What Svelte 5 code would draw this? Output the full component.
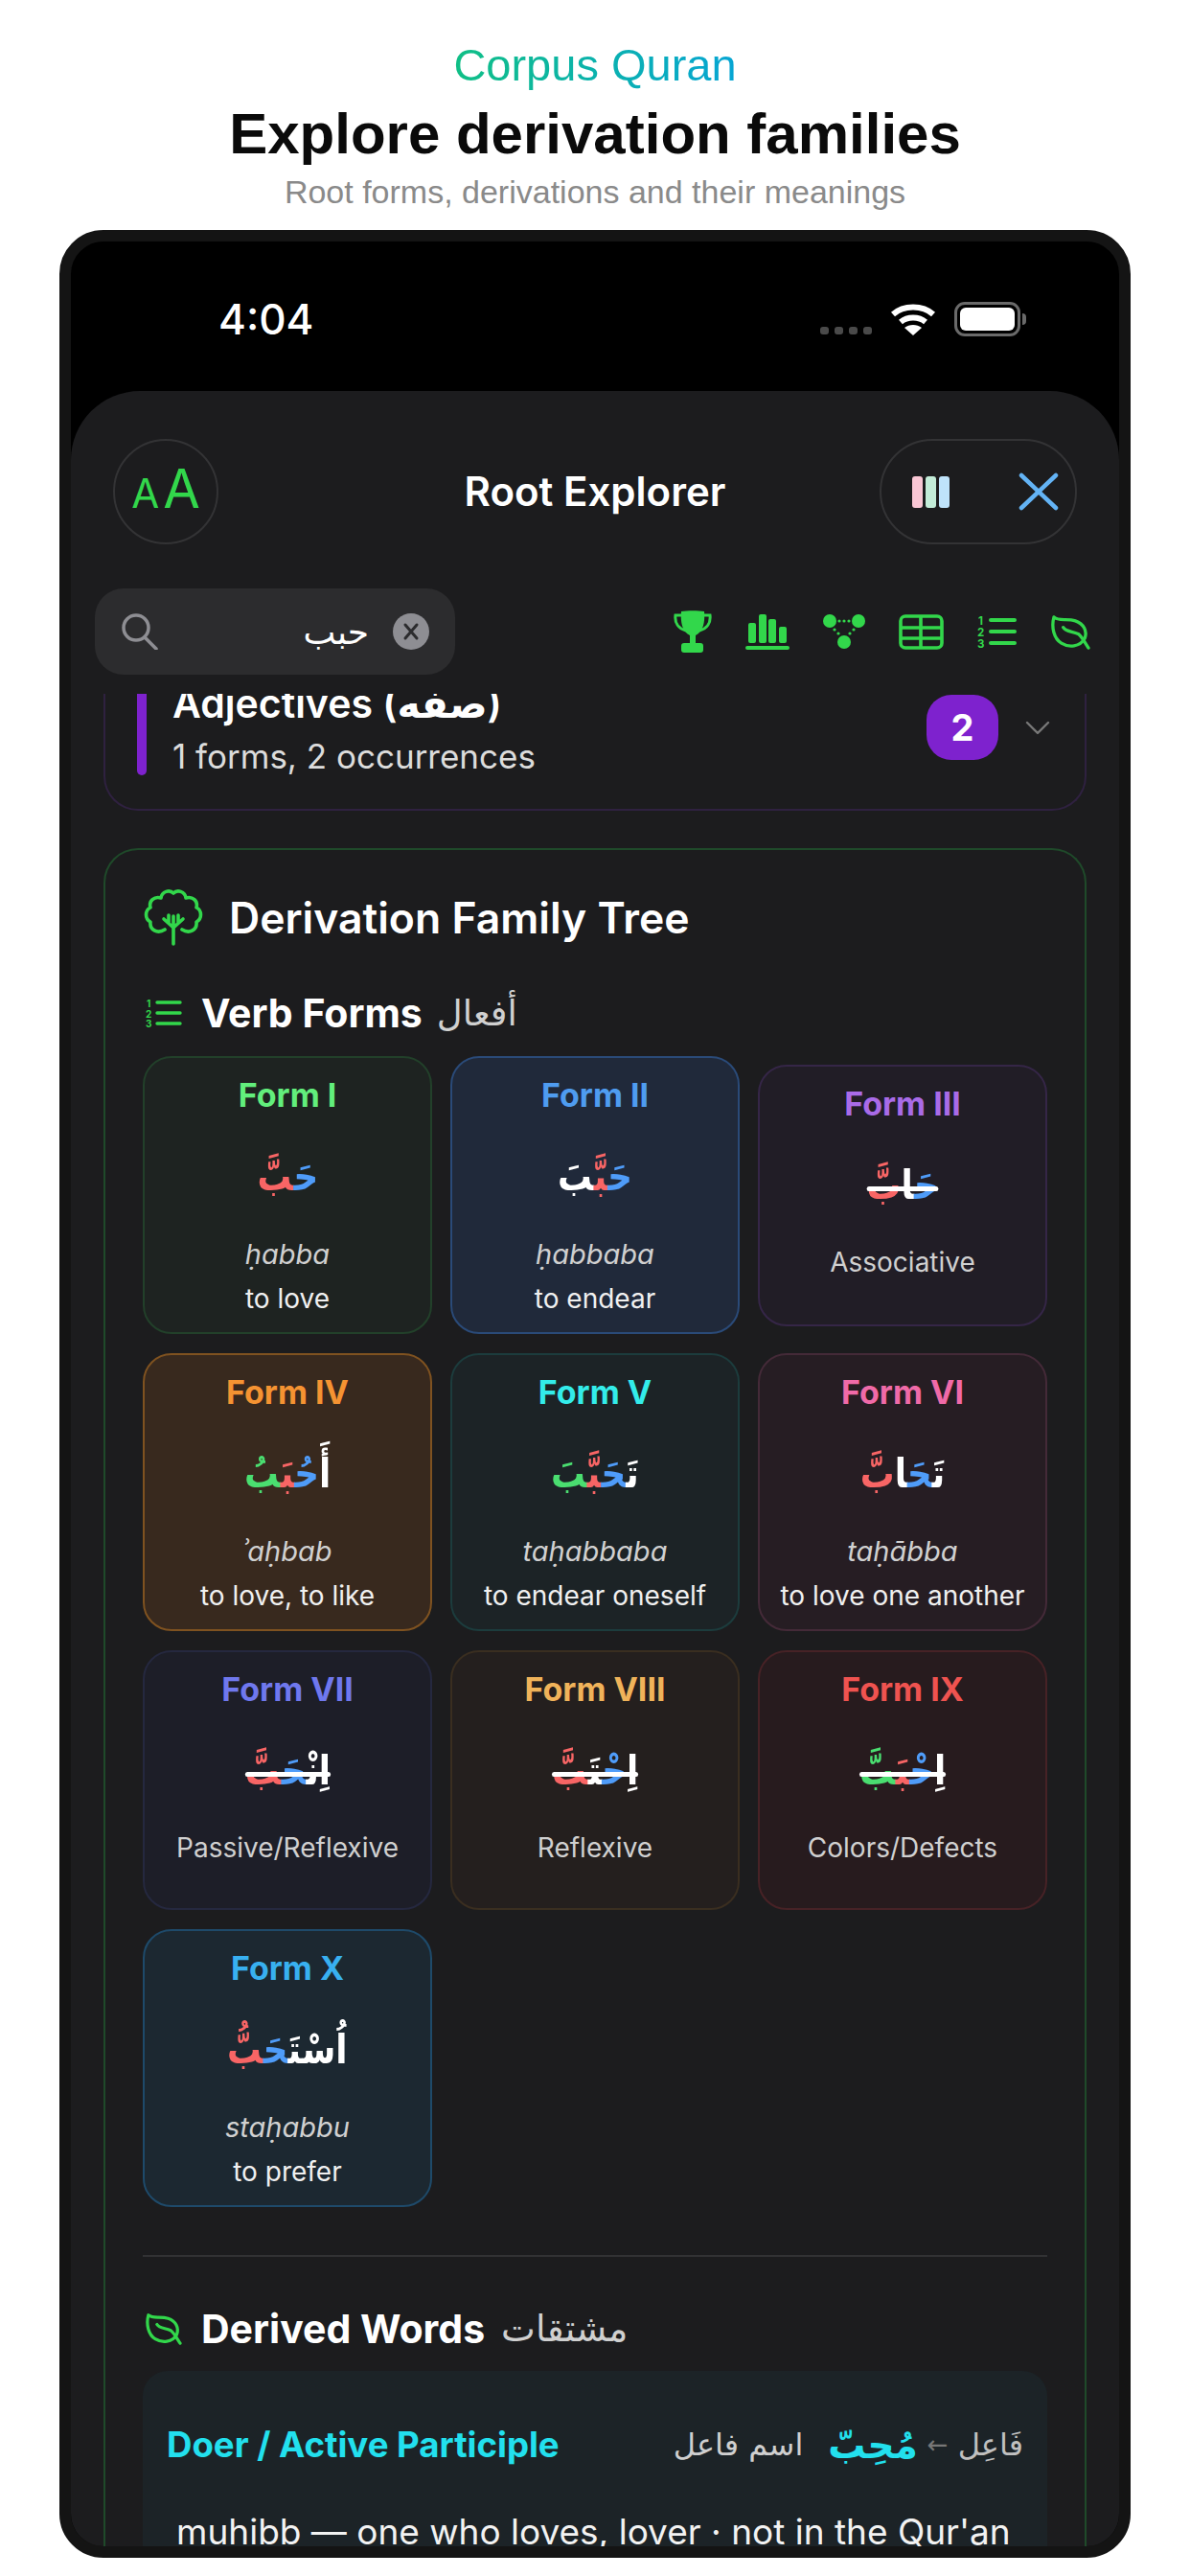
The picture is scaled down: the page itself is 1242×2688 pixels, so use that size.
<script>
  const forms = [
    { k: 'f1', name: 'Form I', ar: [['حَ','b'],['بَّ','r']], tr: 'ḥabba', mean: 'to love' },
    { k: 'f2', name: 'Form II', ar: [['حَ','b'],['ب','r'],['َّ','g'],['بَ','w']], tr: 'ḥabbaba', mean: 'to endear' },
    { k: 'f3', name: 'Form III', ar: [['حَ','b'],['ا','w'],['بَّ','r']], label: 'Associative', bar: true },
    { k: 'f4', name: 'Form IV', ar: [['أَ','w'],['حُ','b'],['بَ','r'],['بُ','g']], tr: 'ʾaḥbab', mean: 'to love, to like' },
    { k: 'f5', name: 'Form V', ar: [['تَ','w'],['حَ','b'],['بَّ','r'],['بَ','g']], tr: 'taḥabbaba', mean: 'to endear oneself' },
    { k: 'f6', name: 'Form VI', ar: [['تَ','w'],['حَ','b'],['ا','w'],['بَّ','r']], tr: 'taḥābba', mean: 'to love one another' },
    { k: 'f7', name: 'Form VII', ar: [['اِنْ','w'],['حَ','b'],['بَّ','r']], label: 'Passive/Reflexive', bar: true },
    { k: 'f8', name: 'Form VIII', ar: [['اِ','w'],['حْ','b'],['تَ','w'],['بَّ','r']], label: 'Reflexive', bar: true },
    { k: 'f9', name: 'Form IX', ar: [['اِ','w'],['حْ','b'],['بَ','r'],['بَّ','g']], label: 'Colors/Defects', bar: true },
    { k: 'f10', name: 'Form X', ar: [['اُسْتَ','w'],['حَ','b'],['ب','r'],['ُّ','g']], tr: 'staḥabbu', mean: 'to prefer' }
  ];
</script>

<div class="page">
  <header class="promo">
    <div class="brand"><span>Corpus Quran</span></div>
    <h1>Explore derivation families</h1>
    <p>Root forms, derivations and their meanings</p>
  </header>

  <div class="phone">
    <div class="status">
      <span class="time">4:04</span>
      <div class="status-icons">
        <div class="dots"><i></i><i></i><i></i><i></i></div>
        <svg class="wifi" width="48" height="36" viewBox="0 0 48 36" fill="none" stroke="#fff" stroke-width="6">
          <path d="M3 13 C14 3 34 3 45 13" />
          <path d="M11 21 C18 15 30 15 37 21" />
          <path d="M24 35 L15 27 C20 23 28 23 33 27Z" fill="#fff" stroke="none" />
        </svg>
        <div class="battery"><div class="cell"></div></div>
        <div class="tip"></div>
      </div>
    </div>

    <section class="sheet">
      <div class="topbar">
        <div class="aa"><span class="sm">A</span><span class="lg">A</span></div>
        <h2>Root Explorer</h2>
        <div class="pill">
          <div class="bars"><i class="p"></i><i class="m"></i><i class="s"></i></div>
          <svg width="42" height="40" viewBox="0 0 42 40" fill="none" stroke="#63b3f5" stroke-width="4.5" stroke-linecap="round">
            <path d="M3 3 L39 37 M39 3 L3 37" />
          </svg>
        </div>
      </div>

      <div class="toolbar">
        <div class="search">
          <svg width="38" height="38" viewBox="0 0 38 38" fill="none" stroke="#8e8e93" stroke-width="3.5" stroke-linecap="round">
            <circle cx="15" cy="15" r="13" />
            <path d="M24 25 L36 37" />
          </svg>
          <span class="query">حبب</span>
          <span class="clear">
            <svg width="20" height="20" viewBox="0 0 20 20" fill="none" stroke="#2c2c2e" stroke-width="3" stroke-linecap="round">
              <path d="M4 3 L16 17 M16 3 L4 17" />
            </svg>
          </span>
        </div>
        <div class="tools">
          <svg width="40" height="44" viewBox="0 0 40 44">
            <path fill="none" stroke="#32d74b" stroke-width="3" d="M8 5 H2 C1 13 5 19 13 21 M32 5 H38 C39 13 35 19 27 21" />
            <path fill="#32d74b" d="M8 1 C14 0 26 0 32 1 C33 12 31 22 23 26 V34 H28 C30 34 31 35 31 37 V41 C31 43 30 44 28 44 H11 C9 44 8 43 8 41 V37 C8 35 9 34 11 34 H17 V26 C9 22 7 12 8 1Z" />
          </svg>
          <svg width="46" height="37" viewBox="0 0 46 37" fill="#32d74b">
            <rect x="3" y="9" width="8" height="21" rx="2" />
            <rect x="14" y="0" width="8" height="30" rx="2" />
            <rect x="24" y="5" width="8" height="25" rx="2" />
            <rect x="35" y="13" width="8" height="17" rx="2" />
            <rect x="0" y="33" width="46" height="4" rx="2" />
          </svg>
          <svg width="44" height="36" viewBox="0 0 44 36" fill="#32d74b">
            <circle cx="7" cy="7" r="7" /><circle cx="37" cy="7" r="7" /><circle cx="22" cy="29" r="7" />
            <circle cx="17" cy="7" r="1.6" /><circle cx="22" cy="7" r="1.6" /><circle cx="27" cy="7" r="1.6" />
            <circle cx="12" cy="16" r="1.6" /><circle cx="16" cy="20" r="1.6" /><circle cx="28" cy="20" r="1.6" /><circle cx="32" cy="16" r="1.6" />
          </svg>
          <svg width="47" height="37" viewBox="0 0 47 37" fill="none" stroke="#32d74b" stroke-width="3.6">
            <rect x="2" y="2" width="43" height="33" rx="5" />
            <path d="M2 14 H45 M2 25 H45 M23 2 V35" />
          </svg>
          <svg width="41" height="35" viewBox="0 0 41 35" fill="none" stroke="#32d74b" stroke-width="4" stroke-linecap="round">
            <path d="M14 5 H39 M14 17 H39 M14 29 H39" />
            <g fill="#32d74b" stroke="none" font-family="Inter" font-weight="700" font-size="11.5">
              <text x="1" y="10">1</text><text x="0" y="22">2</text><text x="0" y="34">3</text>
            </g>
          </svg>
          <svg width="43" height="37" viewBox="0 0 44 38" fill="none" stroke="#32d74b" stroke-width="3.4" stroke-linecap="round" stroke-linejoin="round">
            <path d="M4 3 C9 8 18 4 27 7 C36 10 40 18 37 26 C32 35 20 36 12 31 C4 26 1 14 4 3Z" />
            <path d="M14 14 C17 19 24 18 30 21 C34 24 37 30 41 36" />
          </svg>
        </div>
      </div>

      <div class="scroll">
        <div class="inner">
          <article class="adj">
            <span class="rail"></span>
            <div class="adj-text">
              <div class="adj-title">Adjectives (صفه)</div>
              <div class="adj-sub">1 forms, 2 occurrences</div>
            </div>
            <span class="badge">2</span>
            <svg width="26" height="15" viewBox="0 0 26 15" fill="none" stroke="#777" stroke-width="2.4" stroke-linecap="round" stroke-linejoin="round">
              <path d="M2 2 L13 13 L24 2" />
            </svg>
          </article>

          <article class="tree">
            <div class="tree-head">
              <svg width="64" height="60" viewBox="0 0 64 60" fill="none" stroke="#32d74b" stroke-width="3.6" stroke-linecap="round" stroke-linejoin="round">
                <path d="M32 4 C28 0 20 2 19 9 C12 7 6 12 8 19 C2 22 2 31 8 34 C7 42 15 47 23 42 M32 4 C36 0 44 2 45 9 C52 7 58 12 56 19 C62 22 62 31 56 34 C57 42 49 47 41 42" />
                <path d="M32 57 V28 M32 40 L22 31 M32 40 L42 31 M27 35 V27 M37 35 V27" />
              </svg>
              <h3>Derivation Family Tree</h3>
            </div>

            <div class="sub-head">
              <svg width="38" height="30" viewBox="0 0 38 30" fill="none" stroke="#32d74b" stroke-width="3.4" stroke-linecap="round">
                <path d="M12 4 H36 M12 15 H36 M12 26 H36" />
                <g fill="#32d74b" stroke="none" font-family="Inter" font-weight="700" font-size="10">
                  <text x="1" y="9">1</text><text x="0" y="19.5">2</text><text x="0" y="30">3</text>
                </g>
              </svg>
              <strong>Verb Forms</strong>
              <span class="sub-ar">أفعال</span>
            </div>

            <div class="grid">
              {#each forms as f}
                <div class="form {f.k}" class:short={f.label}>
                  <div class="name">{f.name}</div>
                  <div class="word" class:bar={f.bar} dir="rtl">{#each f.ar as a}<span class={a[1]}>{a[0]}</span>{/each}</div>
                  {#if f.label}
                    <div class="tr plain">{f.label}</div>
                  {:else}
                    <div class="tr">{f.tr}</div>
                    <div class="mean">{f.mean}</div>
                  {/if}
                </div>
              {/each}
            </div>

            <hr />

            <div class="sub-head derived">
              <svg width="40" height="34" viewBox="0 0 44 38" fill="none" stroke="#32d74b" stroke-width="3.6" stroke-linecap="round" stroke-linejoin="round">
                <path d="M4 3 C9 8 18 4 27 7 C36 10 40 18 37 26 C32 35 20 36 12 31 C4 26 1 14 4 3Z" />
                <path d="M14 14 C17 19 24 18 30 21 C34 24 37 30 41 36" />
              </svg>
              <strong>Derived Words</strong>
              <span class="sub-ar">مشتقات</span>
            </div>

            <div class="dcard">
              <div class="dhead">
                <span class="dname">Doer / Active Participle</span>
                <div class="dright">
                  <span class="dar">اسم فاعل</span>
                  <span class="dword">مُحِبّ</span>
                  <span class="darrow">←</span>
                  <span class="dpat">فَاعِل</span>
                </div>
              </div>
              <p class="dtext">muhibb — one who loves, lover · not in the Qur'an</p>
            </div>
          </article>
        </div>
      </div>
    </section>
  </div>
</div>

<style>
  :global(body) {
    margin: 0;
    background: #fff;
  }
  .page {
    width: 1242px;
    height: 2688px;
    overflow: hidden;
    background: #fff;
    font-family: Inter, "DejaVu Sans", sans-serif;
  }
  .promo {
    padding-top: 41px;
    text-align: center;
    font-family: "Liberation Sans", "DejaVu Sans", sans-serif;
  }
  .brand {
    font-size: 47px;
    line-height: 54px;
  }
  .brand span {
    background: linear-gradient(90deg, #10bf85, #06a5d4);
    -webkit-background-clip: text;
    background-clip: text;
    color: transparent;
  }
  h1 {
    margin: 10px 0 0;
    font-size: 60px;
    line-height: 70px;
    font-weight: 700;
    color: #0a0a0a;
  }
  .promo p {
    margin: 4px 0 0;
    font-size: 34px;
    line-height: 42px;
    color: #8a8a8a;
  }
  .phone {
    box-sizing: border-box;
    width: 1118px;
    height: 2429px;
    margin: 19px 0 0 62px;
    border: 12px solid #141414;
    border-radius: 46px;
    background: #000;
    overflow: hidden;
    display: flex;
    flex-direction: column;
    color: #fff;
  }
  .status {
    height: 156px;
    flex: none;
    display: flex;
    align-items: center;
    justify-content: space-between;
    padding: 6px 97px 0 154px;
    box-sizing: border-box;
  }
  .time {
    font-size: 44px;
    font-weight: 500;
  }
  .status-icons {
    display: flex;
    align-items: center;
  }
  .dots {
    display: flex;
    gap: 6px;
    margin: 24px 19px 0 0;
  }
  .dots i {
    width: 9px;
    height: 8px;
    border-radius: 3px;
    background: #4a4a4a;
  }
  .wifi {
    margin-right: 19px;
  }
  .battery {
    box-sizing: border-box;
    width: 69px;
    height: 36px;
    border: 3px solid #6a6a6a;
    border-radius: 11px;
    padding: 3px;
    background: #000;
  }
  .cell {
    width: 100%;
    height: 100%;
    background: #fff;
    border-radius: 6px;
  }
  .tip {
    width: 4px;
    height: 12px;
    margin-left: 2px;
    background: #6a6a6a;
    border-radius: 0 4px 4px 0;
  }
  .sheet {
    flex: 1;
    min-height: 0;
    background: #1c1c1e;
    border-radius: 72px 72px 0 0;
    display: flex;
    flex-direction: column;
  }
  .topbar {
    flex: none;
    display: grid;
    grid-template-columns: 1fr auto 1fr;
    align-items: center;
    padding: 50px 44px 0 44px;
  }
  .aa {
    box-sizing: border-box;
    width: 110px;
    height: 110px;
    border-radius: 50%;
    border: 2px solid #333335;
    display: flex;
    align-items: baseline;
    justify-content: center;
    gap: 4px;
    color: #32d74b;
    line-height: 100px;
    font-weight: 400;
  }
  .aa .sm { font-size: 42px; }
  .aa .lg { font-size: 56px; }
  h2 {
    margin: 0;
    font-size: 42px;
    font-weight: 600;
    line-height: 60px;
  }
  .pill {
    box-sizing: border-box;
    justify-self: end;
    width: 206px;
    height: 110px;
    border-radius: 55px;
    border: 2px solid #333335;
    display: flex;
    align-items: center;
    gap: 72px;
    padding-left: 32px;
  }
  .bars {
    display: flex;
    gap: 3px;
  }
  .bars i {
    width: 11px;
    height: 33px;
    border-radius: 3px;
  }
  .bars .p { background: #f9c6d4; }
  .bars .m { background: #c3ecd8; }
  .bars .s { background: #bfe3fa; }
  .toolbar {
    flex: none;
    display: flex;
    align-items: center;
    justify-content: space-between;
    margin-top: 46px;
    padding: 0 29px 0 25px;
  }
  .search {
    box-sizing: border-box;
    width: 376px;
    height: 90px;
    border-radius: 30px;
    background: #2c2c2e;
    display: flex;
    align-items: center;
    padding: 0 27px 0 28px;
  }
  .query {
    margin-left: auto;
    font-size: 36px;
    font-family: "DejaVu Sans", sans-serif;
    margin-right: 25px;
  }
  .clear {
    width: 38px;
    height: 38px;
    border-radius: 50%;
    background: #8e8e93;
    display: flex;
    align-items: center;
    justify-content: center;
  }
  .tools {
    display: flex;
    align-items: center;
    gap: 35px;
  }
  .scroll {
    flex: 1;
    min-height: 0;
    margin-top: 20px;
    overflow: hidden;
  }
  .inner {
    margin-top: -21px;
    padding: 0 34px;
  }
  .adj {
    box-sizing: border-box;
    height: 143px;
    border: 2px solid #2f2140;
    border-top: 0;
    border-radius: 0 0 36px 36px;
    display: flex;
    align-items: flex-start;
    padding: 0 36px 0 33px;
  }
  .rail {
    width: 10px;
    height: 106px;
    flex: none;
    border-radius: 0 0 5px 5px;
    background: #7e22ce;
  }
  .adj-text {
    flex: 1;
    margin-left: 27px;
  }
  .adj-title {
    font-size: 41px;
    font-weight: 600;
    line-height: 62px;
  }
  .adj-sub {
    font-size: 35px;
    line-height: 50px;
    color: #dcdcdc;
    margin-top: -1px;
  }
  .badge {
    width: 75px;
    height: 68px;
    margin-top: 22px;
    border-radius: 26px;
    background: #7e22ce;
    display: flex;
    align-items: center;
    justify-content: center;
    font-size: 38px;
    font-weight: 700;
  }
  .adj svg {
    margin: 49px 0 0 28px;
  }
  .tree {
    margin-top: 39px;
    border: 2px solid #1f4a2a;
    border-bottom: 0;
    border-radius: 36px 36px 0 0;
    padding: 39px 39px 0;
  }
  .tree-head {
    display: flex;
    align-items: center;
    height: 64px;
    gap: 26px;
  }
  h3 {
    margin: 0;
    font-size: 44.5px;
    font-weight: 600;
  }
  .sub-head {
    display: flex;
    align-items: center;
    height: 50px;
    margin-top: 42px;
    gap: 20px;
    padding-left: 3px;
  }
  .sub-head strong {
    font-size: 41px;
    font-weight: 700;
  }
  .sub-ar {
    font-family: "DejaVu Sans", sans-serif;
    font-size: 37px;
    color: #d0d0d0;
    margin-left: -5px;
  }
  .grid {
    display: grid;
    grid-template-columns: repeat(3, 302px);
    justify-content: space-between;
    row-gap: 20px;
    align-items: center;
    margin-top: 20px;
  }
  .form {
    box-sizing: border-box;
    border: 2px solid var(--edge);
    border-radius: 30px;
    background: var(--fill);
    text-align: center;
    padding: 19px 6px 12px;
  }
  .form.short {
    padding-bottom: 40px;
  }
  .form.f3 {
    padding-bottom: 42px;
  }
  .name {
    font-size: 34px;
    font-weight: 700;
    line-height: 40px;
    color: var(--tone);
  }
  .word {
    position: relative;
    width: fit-content;
    margin: 20px auto 0;
    height: 90px;
    font-family: "DejaVu Sans", sans-serif;
    font-size: 42px;
    font-weight: 700;
    line-height: 90px;
    transform: scaleX(0.85);
  }
  .word.bar::after {
    content: "";
    position: absolute;
    left: 0;
    right: 0;
    top: 46px;
    height: 5px;
    border-radius: 3px;
    background: #fff;
  }
  .w { color: #fff; }
  .b { color: #4f9cf9; }
  .r { color: #f86565; }
  .g { color: #4ade70; }
  .tr {
    margin-top: 13px;
    font-size: 29px;
    line-height: 46px;
    font-style: italic;
    color: #d0d0d0;
  }
  .tr.plain {
    font-style: normal;
    font-size: 28px;
    margin-top: 12px;
  }
  .mean {
    font-size: 28px;
    line-height: 46px;
    color: #f0f0f0;
    white-space: nowrap;
  }
  .f1 { --tone: #62ee7c; --fill: #1e2321; --edge: #22402a; }
  .f2 { --tone: #4f9cf0; --fill: #20293a; --edge: #2a4a78; }
  .f3 { --tone: #a96be8; --fill: #211d26; --edge: #352647; }
  .f4 { --tone: #f59332; --fill: #38291e; --edge: #7f5220; }
  .f5 { --tone: #33ecea; --fill: #1c2326; --edge: #1c3c3d; }
  .f6 { --tone: #f06aa8; --fill: #261d23; --edge: #442a38; }
  .f7 { --tone: #6f78ee; --fill: #1d1e28; --edge: #25283f; }
  .f8 { --tone: #f0b35a; --fill: #241f1e; --edge: #3a2e20; }
  .f9 { --tone: #ef5350; --fill: #271b1e; --edge: #472226; }
  .f10 { --tone: #38b0f0; --fill: #1c2831; --edge: #1e4a6a; }
  hr {
    border: 0;
    height: 2px;
    background: #323234;
    margin: 50px 0 0;
  }
  .sub-head.derived {
    margin-top: 50px;
    padding-left: 2px;
    gap: 19px;
  }
  .derived .sub-ar {
    font-size: 38px;
    margin-left: -2px;
  }
  .dcard {
    margin-top: 19px;
    background: #1c2327;
    border-radius: 26px 26px 0 0;
    padding: 47px 25px 0 25px;
  }
  .dhead {
    display: flex;
    align-items: center;
    justify-content: space-between;
    height: 60px;
  }
  .dname {
    font-size: 36.6px;
    font-weight: 700;
    color: #22e0ee;
  }
  .dright {
    display: flex;
    align-items: center;
    font-family: "DejaVu Sans", sans-serif;
    color: #cfcfcf;
  }
  .dar { font-size: 32px; margin-right: 26px; }
  .dword { font-size: 39px; font-weight: 700; color: #22e0ee; }
  .darrow { font-size: 26px; color: #777; margin: 0 10px; }
  .dpat { font-size: 32px; color: #c0c0c0; }
  .dtext {
    margin: 36px 0 0 10px;
    font-size: 37px;
    line-height: 50px;
    color: #f2f2f2;
    white-space: nowrap;
  }
</style>
